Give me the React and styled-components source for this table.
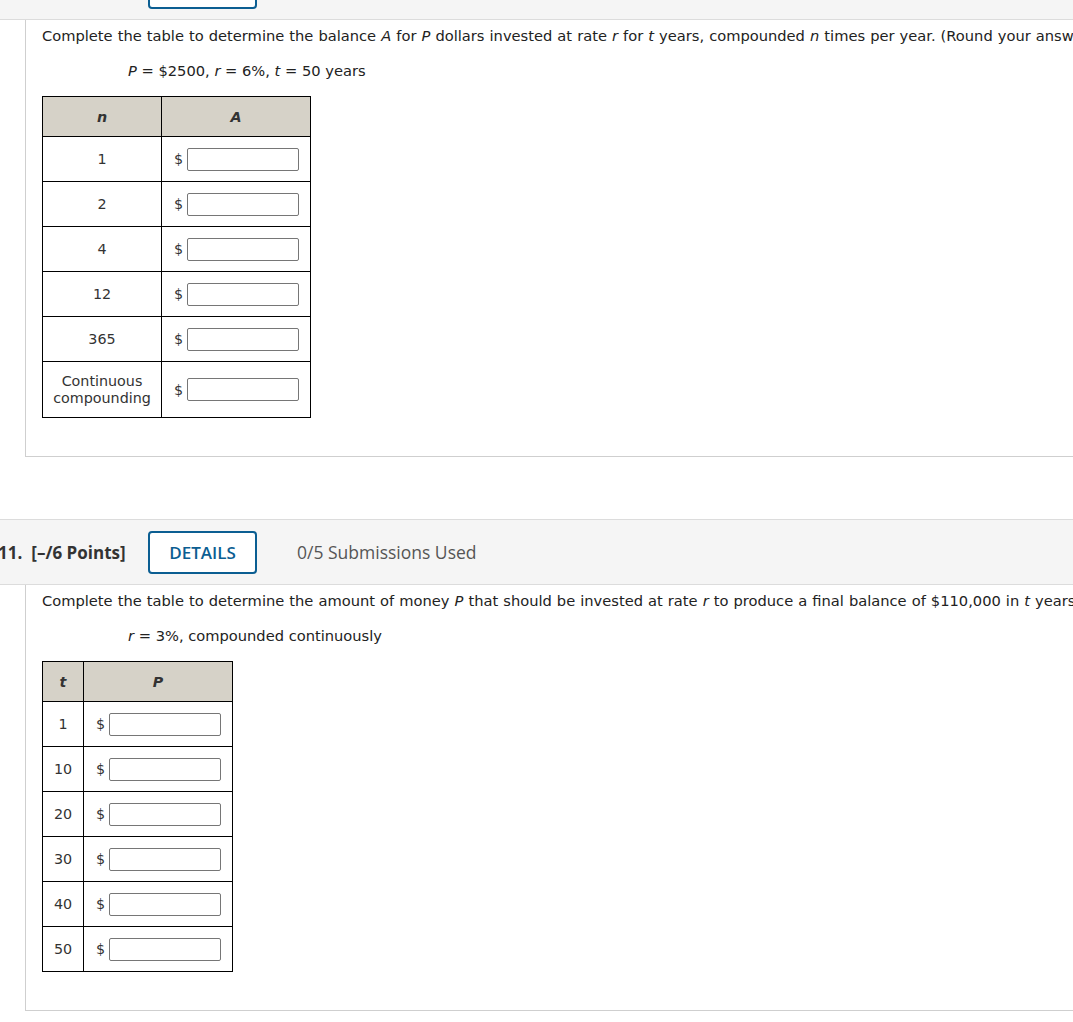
import styled, { createGlobalStyle } from 'styled-components'

const GlobalStyle = createGlobalStyle`
  html, body {
    margin: 0;
    padding: 0;
    background: #fff;
    overflow: hidden;
  }
`

const questions = [
  {
    number: 10,
    points: 6,
    used: '0/5 Submissions Used',
    prompt: (
      <>
        Complete the table to determine the balance <i>A</i> for <i>P</i> dollars invested at rate{' '}
        <i>r</i> for <i>t</i> years, compounded <i>n</i> times per year. (Round your answers to the
        nearest cent.)
      </>
    ),
    given: (
      <>
        <i>P</i> = $2500, <i>r</i> = 6%, <i>t</i> = 50 years
      </>
    ),
    colA: 'n',
    colB: 'A',
    widths: [119, 149],
    rows: ['1', '2', '4', '12', '365', 'Continuous compounding'],
  },
  {
    number: 11,
    points: 6,
    used: '0/5 Submissions Used',
    prompt: (
      <>
        Complete the table to determine the amount of money <i>P</i> that should be invested at rate{' '}
        <i>r</i> to produce a final balance of $110,000 in <i>t</i> years. (Round your answers to the
        nearest cent.)
      </>
    ),
    given: (
      <>
        <i>r</i> = 3%, compounded continuously
      </>
    ),
    colA: 't',
    colB: 'P',
    widths: [41, 148],
    rows: ['1', '10', '20', '30', '40', '50'],
  },
]

const App = () => {
  return (
    <>
      <GlobalStyle />
      <Page>
        {questions.map((q) => (
          <Question key={q.number}>
            <QuestionHeader>
              <PointsLabel>
                {q.number}.<span>[–/{q.points} Points]</span>
              </PointsLabel>
              <DetailsButton>DETAILS</DetailsButton>
              <Submissions>{q.used}</Submissions>
            </QuestionHeader>
            <QuestionBody>
              <Prompt>{q.prompt}</Prompt>
              <Given>{q.given}</Given>
              <AnswerTable>
                <colgroup>
                  <col style={{ width: q.widths[0] }} />
                  <col style={{ width: q.widths[1] }} />
                </colgroup>
                <thead>
                  <tr>
                    <HeadCell>{q.colA}</HeadCell>
                    <HeadCell>{q.colB}</HeadCell>
                  </tr>
                </thead>
                <tbody>
                  {q.rows.map((label) => (
                    <tr key={label}>
                      <LabelCell $tall={label.length > 10}>{label}</LabelCell>
                      <InputCell>
                        <Dollar>$</Dollar>
                        <AmountInput type='text' />
                      </InputCell>
                    </tr>
                  ))}
                </tbody>
              </AnswerTable>
            </QuestionBody>
          </Question>
        ))}
      </Page>
    </>
  )
}

export default App

const Page = styled.div`
  width: 1600px;
  margin: -46px 0 0 -9px;
`

const Question = styled.section`
  margin-bottom: 62px;
`

const QuestionHeader = styled.header`
  display: flex;
  align-items: center;
  height: 64px;
  background: #f5f5f5;
  border-top: 1px solid #dcdcdc;
  border-bottom: 1px solid #dcdcdc;
  font-family: 'Open Sans', sans-serif;
  font-size: 17px;
  color: #333;
`

const PointsLabel = styled.div`
  width: 128px;
  margin-left: 7px;
  font-weight: 700;
  color: #333;

  span {
    margin-left: 9px;
  }
`

const DetailsButton = styled.button`
  box-sizing: border-box;
  height: 43px;
  width: 109px;
  margin: 0 40px 0 22px;
  padding: 0;
  background: #fff;
  border: 2px solid #0b5e92;
  border-radius: 4px;
  color: #0b5e92;
  font-family: 'Open Sans', sans-serif;
  font-size: 17px;
  font-weight: 600;
`

const Submissions = styled.div`
  font-size: 17.5px;
  color: #555;
`

const QuestionBody = styled.div`
  margin-left: 34px;
  padding: 6px 0 38px 16px;
  border-left: 1px solid #cfcfcf;
  border-bottom: 1px solid #cfcfcf;
  font-family: 'DejaVu Sans', Verdana, sans-serif;
  font-size: 14.67px;
  color: #222;
`

const Prompt = styled.p`
  margin: 0;
  line-height: 20px;
  word-spacing: 0.4px;
  white-space: nowrap;
`

const Given = styled.p`
  margin: 15px 0 15px 86px;
  line-height: 20px;
`

const AnswerTable = styled.table`
  border-collapse: collapse;
  table-layout: fixed;
  border: 1px solid #000;
  color: #333;
  font-size: 14.3px;
`

const HeadCell = styled.th`
  height: 39px;
  padding: 0;
  background: #d6d2c8;
  border: 1px solid #000;
  font-style: italic;
  font-weight: 700;
  text-align: center;
`

const LabelCell = styled.td`
  height: ${(props) => (props.$tall ? '55px' : '44px')};
  padding: 0 2px;
  border: 1px solid #000;
  text-align: center;
  line-height: 17px;
`

const InputCell = styled.td`
  padding: 0 11px 0 12px;
  border: 1px solid #000;
  white-space: nowrap;
`

const Dollar = styled.span`
  display: inline-block;
  width: 13px;
  vertical-align: middle;
`

const AmountInput = styled.input`
  box-sizing: border-box;
  width: 112px;
  height: 23px;
  margin: 0;
  padding: 1px 4px;
  border: 1px solid #767676;
  border-radius: 2px;
  background: #fff;
  vertical-align: middle;
  font-family: 'DejaVu Sans', Verdana, sans-serif;
  font-size: 13px;
`
